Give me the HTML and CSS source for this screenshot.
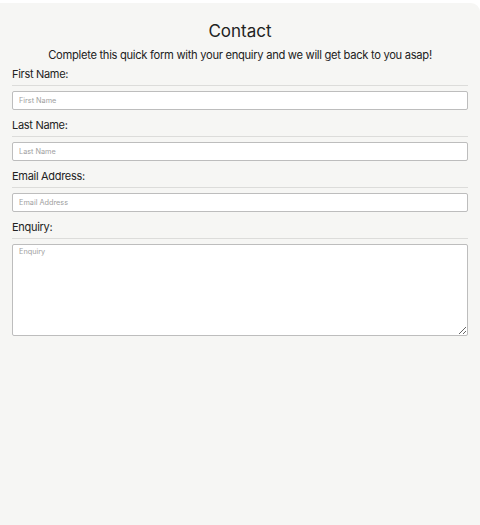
FILE: index.html
```html
<!DOCTYPE html>
<html lang="en">
<head>
<meta charset="utf-8">
<title>Contact</title>
<link rel="stylesheet" href="styles.css">
</head>
<body>
<main class="card">
  <h1 class="title">Contact</h1>
  <p class="intro">Complete this quick form with your enquiry and we will get back to you asap!</p>
  <form class="form">
    <div class="field">
      <label class="label" for="first">First Name:</label>
      <hr class="rule">
      <input class="input" id="first" type="text" placeholder="First Name">
    </div>
    <div class="field">
      <label class="label" for="last">Last Name:</label>
      <hr class="rule">
      <input class="input" id="last" type="text" placeholder="Last Name">
    </div>
    <div class="field">
      <label class="label" for="email">Email Address:</label>
      <hr class="rule">
      <input class="input" id="email" type="email" placeholder="Email Address">
    </div>
    <div class="field">
      <label class="label" for="enquiry">Enquiry:</label>
      <hr class="rule">
      <textarea class="input textarea" id="enquiry" placeholder="Enquiry"></textarea>
    </div>
  </form>
</main>
</body>
</html>
```
FILE: styles.css
```css
html, body {
  margin: 0;
  padding: 0;
  background: #ffffff;
}
body {
  font-family: "Inter", "Noto Sans", sans-serif;
  color: #222;
}
.card {
  margin-top: 3px;
  min-height: 540px;
  background: #f6f6f4;
  border-radius: 0 9px 0 0;
  padding: 16px 12px 0;
  box-sizing: border-box;
}
.title {
  margin: 0;
  font-size: 17px;
  line-height: 24px;
  font-weight: 400;
  text-align: center;
  color: #222;
}
.intro {
  margin: 3px 0 0;
  font-size: 11.2px;
  letter-spacing: -0.3px;
  line-height: 18px;
  text-align: center;
  color: #222;
}
.form {
  display: flex;
  flex-direction: column;
  margin-top: 1px;
}
.field {
  display: flex;
  flex-direction: column;
}
.label {
  font-size: 11px;
  letter-spacing: -0.3px;
  line-height: 18px;
  color: #222;
}
.rule {
  margin: 2px 0 5px;
  border: 0;
  border-top: 1px solid #dcdcda;
  height: 0;
}
.input {
  box-sizing: border-box;
  height: 19px;
  margin: 0 0 6px;
  padding: 0 6px;
  border: 1px solid #bdbdbd;
  border-radius: 2px;
  background: #fff;
  font-family: inherit;
  font-size: 7.3px;
  color: #333;
}
.input::placeholder {
  color: #a0a0a0;
}
.textarea {
  height: 92px;
  padding: 2px 6px;
  resize: vertical;
}
```
